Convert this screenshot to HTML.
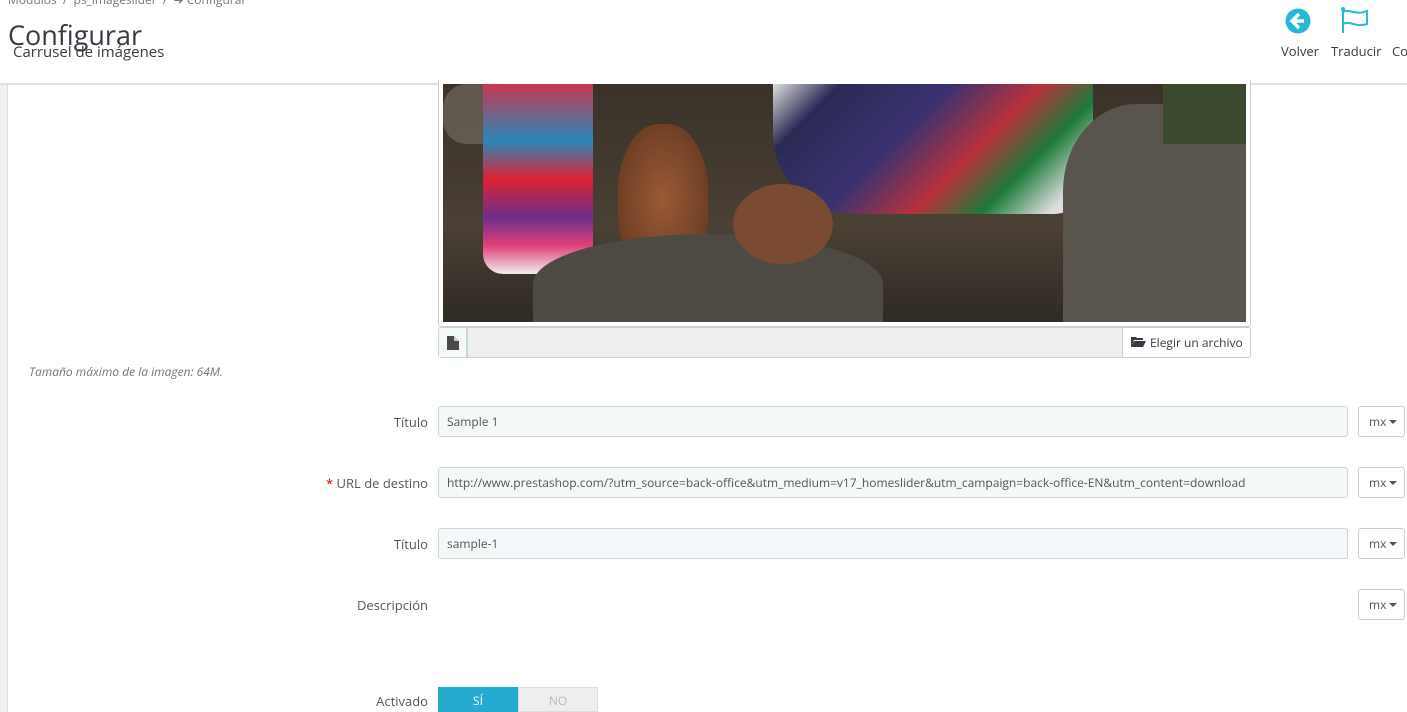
<!DOCTYPE html>
<html><head><meta charset="utf-8"><style>
*{box-sizing:border-box;margin:0;padding:0}
body{width:1407px;height:712px;overflow:hidden;background:#fff;font-family:"Open Sans","Liberation Sans",sans-serif;color:#363a41;position:relative}
.abs{position:absolute}
.lbl{position:absolute;right:979px;font-size:13px;color:#555;text-align:right;white-space:nowrap}
.inp{position:absolute;left:438px;width:910px;height:31px;background:#f5f8f9;border:1px solid #c7d6db;border-radius:3px;font-size:12px;padding:6px 8px;color:#555;white-space:nowrap}
.mx{position:absolute;left:1358px;width:47px;height:31px;border:1px solid #ccc;border-radius:3px;background:#fff;font-size:12px;color:#555;padding:6px 0 0 10px}
.mx:after{content:"";position:absolute;left:30px;top:13px;border-left:4px solid transparent;border-right:4px solid transparent;border-top:4px solid #555}
</style></head><body>
<div class="abs" style="left:8px;top:-9px;font-size:12px;color:#777">Modulos &nbsp;/&nbsp; ps_imageslider &nbsp;/&nbsp; ➜ Configurar</div>
<div class="abs" style="left:8px;top:16px;font-size:27px;color:#363a41">Configurar</div>
<div class="abs" style="left:13px;top:42px;font-size:15px;color:#363a41">Carrusel de imágenes</div>
<svg class="abs" style="left:1285px;top:8px" width="26" height="26" viewBox="0 0 26 26"><circle cx="13" cy="13" r="12.5" fill="#25b9d7"/><path d="M14 6 L7 13 L14 20 M7.5 13 H19" stroke="#fff" stroke-width="3.5" fill="none"/></svg>
<div class="abs" style="left:1281px;top:42px;font-size:13px">Volver</div>
<svg class="abs" style="left:1340px;top:6px" width="30" height="28" viewBox="0 0 30 28"><circle cx="3" cy="3" r="2" fill="#25b9d7"/><path d="M3 3 V27 M3 6 C10 2,14 10,27 5 V18 C16 22,10 14,3 18" stroke="#25b9d7" stroke-width="2" fill="none"/></svg>
<div class="abs" style="left:1331px;top:42px;font-size:13px">Traducir</div>
<div class="abs" style="left:1392px;top:42px;font-size:13px">Co</div>
<div class="abs" style="left:0;top:83px;width:1407px;height:2px;background:#e0e0e0"></div>
<div class="abs" style="left:0;top:85px;width:8px;height:627px;background:#eff1f2;border-right:1px solid #dcdcdc"></div>
<div class="abs" style="left:438px;top:80px;width:813px;height:247px;border:1px solid #ccc;border-top:none;border-radius:0 0 3px 3px;background:#fff"></div>
<div class="abs" style="left:443px;top:84px;width:803px;height:238px;overflow:hidden;background:linear-gradient(180deg,#3a3128 0%,#4a4034 60%,#2f2a25 100%)">
<div class="abs" style="left:0;top:0;width:60px;height:60px;background:#7a7268;opacity:.6;border-radius:40%"></div>
<div class="abs" style="left:40px;top:0;width:110px;height:190px;background:linear-gradient(180deg,#c83850,#2a86b8 30%,#d23 50%,#6b2e8a 70%,#e04078 85%,#eee);border-radius:0 0 30px 20px"></div>
<div class="abs" style="left:175px;top:40px;width:90px;height:150px;background:radial-gradient(ellipse,#9a5a35,#5e351f);border-radius:45% 45% 40% 40%"></div>
<div class="abs" style="left:90px;top:150px;width:350px;height:100px;background:#4d4a44;border-radius:50% 50% 0 0"></div>
<div class="abs" style="left:330px;top:0;width:320px;height:130px;background:linear-gradient(135deg,#ddd 0%,#2b2a55 15%,#3a3270 40%,#b8323c 60%,#1d7a3a 75%,#ddd 90%);border-radius:0 0 40px 80px"></div>
<div class="abs" style="left:290px;top:100px;width:100px;height:80px;background:#7a4a33;border-radius:50%"></div>
<div class="abs" style="left:620px;top:20px;width:183px;height:218px;background:#59544c;border-radius:40% 0 0 0"></div>
<div class="abs" style="left:720px;top:0;width:83px;height:60px;background:#3b4a2e"></div>
</div>
<div class="abs" style="left:438px;top:327px;width:813px;height:31px;border:1px solid #c7d6db;border-radius:3px;background:#eee"></div>
<div class="abs" style="left:439px;top:328px;width:29px;height:29px;background:#f5f8f9;border-right:2px solid #c7d6db"></div>
<svg class="abs" style="left:447px;top:336px" width="12" height="14"><path d="M0 0 H7 L12 5 V14 H0Z" fill="#4a4a4a"/><path d="M7 0 V5 H12" fill="#ccc"/></svg>
<div class="abs" style="left:1122px;top:327px;width:129px;height:31px;border:1px solid #ccc;border-radius:0 3px 3px 0;background:#fff;font-size:12px;color:#363a41;padding:6px 0 0 27px">Elegir un archivo</div>
<svg class="abs" style="left:1131px;top:336px" width="15" height="11"><path d="M0 1 H5 L6 2 H12 V4 H3 L0 11Z M3 5 H15 L12 11 H0Z" fill="#363a41"/></svg>
<div class="abs" style="left:29px;top:363px;font-size:12px;font-style:italic;color:#777">Tamaño máximo de la imagen: 64M.</div>
<div class="lbl" style="top:413px">Título</div>
<div class="inp" style="top:406px">Sample 1</div><div class="mx" style="top:406px">mx</div>
<div class="lbl" style="top:474px"><span style="color:#c00">*</span> URL de destino</div>
<div class="inp" style="top:467px">http://www.prestashop.com/?utm_source=back-office&amp;utm_medium=v17_homeslider&amp;utm_campaign=back-office-EN&amp;utm_content=download</div><div class="mx" style="top:467px">mx</div>
<div class="lbl" style="top:535px">Título</div>
<div class="inp" style="top:528px">sample-1</div><div class="mx" style="top:528px">mx</div>
<div class="lbl" style="top:596px">Descripción</div>
<div class="mx" style="top:589px">mx</div>
<div class="lbl" style="top:692px">Activado</div>
<div class="abs" style="left:438px;top:687px;width:80px;height:25px;background:#25aad0;color:#fff;font-size:12px;text-align:center;padding-top:5px">SÍ</div>
<div class="abs" style="left:518px;top:687px;width:80px;height:25px;background:#eee;border:1px solid #ddd;color:#bbb;font-size:12px;text-align:center;padding-top:4px">NO</div>
</body></html>
